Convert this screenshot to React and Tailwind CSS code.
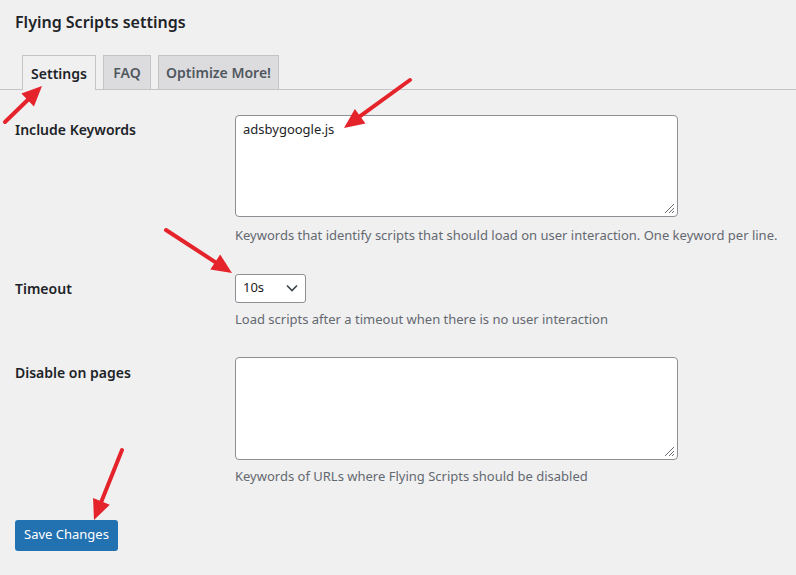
import React from "react";

const Arrow = ({ x1, y1, x2, y2 }) => {
  const a = Math.atan2(y2 - y1, x2 - x1);
  const L = 20, W = 9;
  const bx = x2 - L * Math.cos(a), by = y2 - L * Math.sin(a);
  const p1 = `${bx + W * Math.sin(a)},${by - W * Math.cos(a)}`;
  const p2 = `${bx - W * Math.sin(a)},${by + W * Math.cos(a)}`;
  return (
    <g>
      <line x1={x1} y1={y1} x2={bx} y2={by} stroke="#e5232b" strokeWidth="4" strokeLinecap="round" />
      <polygon points={`${x2},${y2} ${p1} ${p2}`} fill="#e5232b" />
    </g>
  );
};

const Grip = () => (
  <svg className="absolute right-[2px] bottom-[2px]" width="11" height="11" viewBox="0 0 11 11">
    <path d="M10 1L1 10M10 5L5 10M10 8L8 10" stroke="#6b6e72" strokeWidth="1" />
  </svg>
);

const Row = ({ label, children, desc, labelPad, descGap }) => (
  <div className="flex">
    <div className={`w-[220px] text-[14px] font-semibold text-[#1d2327] ${labelPad}`}>{label}</div>
    <div className="flex flex-col">
      {children}
      <p className={`${descGap} text-[13px] text-[#646970]`}>{desc}</p>
    </div>
  </div>
);

export default function App() {
  return (
    <div className="relative w-[796px] h-[575px] bg-[#f0f0f1] overflow-hidden text-[#1d2327]" style={{ fontFamily: '"Noto Sans", sans-serif' }}>
      <h1 className="pl-[15px] pt-[10px] text-[16px] font-semibold">Flying Scripts settings</h1>
      <div className="mt-[21px] flex items-end gap-[7px] border-b border-[#c3c4c7] pl-[22px] h-[35px]">
        <div className="h-[35px] w-[74px] flex items-center justify-center border border-b-0 border-[#c3c4c7] bg-[#f0f0f1] text-[14px] font-semibold -mb-px">Settings</div>
        <div className="h-[34px] w-[48px] flex items-center justify-center border border-b-0 border-[#c3c4c7] bg-[#dcdcde] text-[14px] font-semibold text-[#50575e]">FAQ</div>
        <div className="h-[34px] w-[121px] flex items-center justify-center border border-b-0 border-[#c3c4c7] bg-[#dcdcde] text-[14px] font-semibold text-[#50575e]">Optimize More!</div>
      </div>
      <div className="pl-[15px] pt-[25px] flex flex-col gap-[28px]">
        <Row label="Include Keywords" labelPad="pt-[4px]" descGap="mt-[9px]" desc="Keywords that identify scripts that should load on user interaction. One keyword per line.">
          <div className="relative w-[443px] h-[102px] bg-white border border-[#8c8f94] rounded-[4px] px-[7px] py-[4px] text-[13px]">
            adsbygoogle.js
            <Grip />
          </div>
        </Row>
        <Row label="Timeout" labelPad="pt-[4px]" descGap="mt-[7px]" desc="Load scripts after a timeout when there is no user interaction">
          <div className="w-[71px] h-[29px] bg-white border border-[#8c8f94] rounded-[3px] flex items-center justify-between px-[7px] text-[13px]">
            <span>10s</span>
            <svg width="12" height="8" viewBox="0 0 12 8"><path d="M1 1.5l5 5 5-5" fill="none" stroke="#3c434a" strokeWidth="1.6" /></svg>
          </div>
        </Row>
        <Row label="Disable on pages" labelPad="pt-[5px]" descGap="mt-[7px]" desc="Keywords of URLs where Flying Scripts should be disabled">
          <div className="relative w-[443px] h-[103px] bg-white border border-[#8c8f94] rounded-[4px]">
            <Grip />
          </div>
        </Row>
      </div>
      <button className="ml-[15px] mt-[33px] h-[31px] w-[103px] rounded-[3px] bg-[#2271b1] text-white text-[13px]">Save Changes</button>
      <svg className="absolute inset-0 pointer-events-none" width="796" height="575">
        <Arrow x1={5} y1={122} x2={42} y2={86} />
        <Arrow x1={410} y1={80} x2={344} y2={128} />
        <Arrow x1={166} y1={230} x2={232} y2={273} />
        <Arrow x1={122} y1={450} x2={94} y2={520} />
      </svg>
    </div>
  );
}
